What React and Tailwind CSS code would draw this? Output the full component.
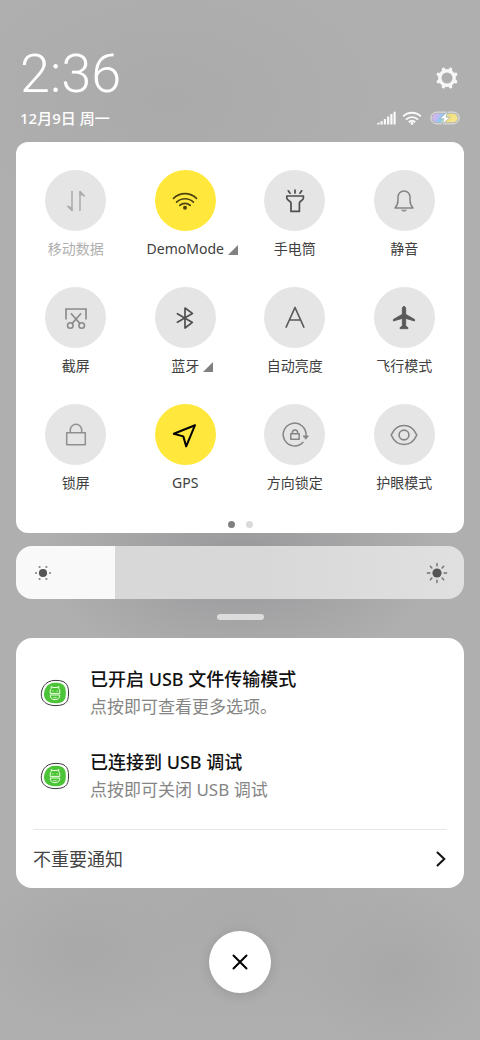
import { useState } from "react";

function Icon({ children, width = 1.6 }) {
  return (
    <svg
      viewBox="0 0 30 30"
      className="size-[30px]"
      fill="none"
      stroke="currentColor"
      strokeWidth={width}
      strokeLinecap="round"
      strokeLinejoin="round"
      aria-hidden="true"
    >
      {children}
    </svg>
  );
}

const icons = {
  data: (
    <Icon width={1.5}>
      <path d="M11 5.5V24.5L6.8 20.2M19 24.5V5.5L23.4 10" />
      <path d="M11 24.5L6.8 20.2L11 21.4zM19 5.5L23.4 10L19 8.6z" fill="currentColor" strokeWidth="0.6" />
    </Icon>
  ),
  wifi: (
    <Icon width={1.7}>
      <path d="M3.5 12.4a16.3 16.3 0 0 1 23 0M6.6 16.2a12 12 0 0 1 16.8 0M9.8 19.4a7.6 7.6 0 0 1 10.4 0" />
      <circle cx="15" cy="21.8" r="2" fill="currentColor" stroke="none" />
    </Icon>
  ),
  torch: (
    <Icon width={1.7}>
      <path d="M6.8 10H23.4V12C23.4 14.4 19.4 15 19.4 17V25.4H11V17C11 15 6.8 14.4 6.8 12z" />
      <path d="M15 4V7M8.3 4.8L10 7.2M21.7 4.8L20 7.2" />
    </Icon>
  ),
  bell: (
    <Icon width={1.5}>
      <path d="M6 22H24C22 20 21 17.5 21 14V11.3C21 7.8 18.5 5 15 5S9 7.8 9 11.3V14C9 17.5 8 20 6 22z" />
      <path d="M12.8 24.4C14 25.5 16 25.5 17.2 24.4z" fill="currentColor" strokeWidth="0.8" />
    </Icon>
  ),
  cut: (
    <Icon>
      <path d="M5 16.5V6H25V16.5" strokeLinecap="butt" strokeLinejoin="miter" />
      <path d="M10.3 10.8L18.8 20.4M19.7 10.8L11.2 20.4" />
      <circle cx="9.3" cy="22.5" r="2.8" />
      <circle cx="20.7" cy="22.5" r="2.8" />
    </Icon>
  ),
  bluetooth: (
    <Icon width={1.7}>
      <path d="M7.4 10.7L22.4 19.4L15 25V5L22.4 10.4L7.4 19.2" />
    </Icon>
  ),
  auto: (
    <Icon width={1.7}>
      <path d="M6.2 24L15 4.5L23.8 24M9.5 17H20.5" />
    </Icon>
  ),
  plane: (
    <Icon width={0.8}>
      <path
        d="M15 3.6C16.1 3.6 16.7 4.4 16.7 5.5V11.3L25.6 16.4V18L16.7 15.4V23L19 24.6V25.7H11V24.6L13.3 23V15.4L4.4 18V16.4L13.3 11.3V5.5C13.3 4.4 13.9 3.6 15 3.6z"
        fill="currentColor"
      />
    </Icon>
  ),
  lock: (
    <Icon width={1.5}>
      <path d="M5.7 12.7H24.3V24.8H5.7zM9.3 12.7V10A5.7 5.7 0 0 1 20.7 10V12.7" />
    </Icon>
  ),
  gps: (
    <Icon width={2}>
      <path d="M25 5.2L3.8 13.8L13.3 16.4L16.2 26.4z" />
    </Icon>
  ),
  rotation: (
    <Icon width={1.5}>
      <path d="M26 15.5A11.4 11.4 0 1 0 23 22.3" />
      <path d="M23.4 15.9H28.4L25.9 19z" fill="currentColor" strokeWidth="0.8" />
      <path d="M10.8 13.8H19.2V19.3H10.8zM12.4 13.8V12.6A2.6 2.6 0 0 1 17.6 12.6V13.8" />
    </Icon>
  ),
  eye: (
    <Icon>
      <path d="M2.2 15C5 8.6 9.7 5.5 15 5.5S25 8.6 27.8 15C25 21.4 20.3 24.5 15 24.5S5 21.4 2.2 15z" />
      <circle cx="15" cy="15" r="4.9" />
    </Icon>
  ),
};

const tiles = [
  { id: "data", label: "移动数据", color: "text-[#ababab]", text: "text-[#b0b0b0]", disabled: true },
  { id: "wifi", label: "DemoMode", color: "text-[#4d4412]", on: true, more: true },
  { id: "torch", label: "手电筒", color: "text-[#4f4f4f]" },
  { id: "bell", label: "静音", color: "text-[#858585]" },
  { id: "cut", label: "截屏", color: "text-[#8a8a8a]" },
  { id: "bluetooth", label: "蓝牙", color: "text-[#4f4f4f]", more: true },
  { id: "auto", label: "自动亮度", color: "text-[#5a5a5a]" },
  { id: "plane", label: "飞行模式", color: "text-[#585858]" },
  { id: "lock", label: "锁屏", color: "text-[#8f8f8f]" },
  { id: "gps", label: "GPS", color: "text-black", on: true },
  { id: "rotation", label: "方向锁定", color: "text-[#858585]" },
  { id: "eye", label: "护眼模式", color: "text-[#858585]" },
];

const notifications = [
  { title: "已开启 USB 文件传输模式", text: "点按即可查看更多选项。" },
  { title: "已连接到 USB 调试", text: "点按即可关闭 USB 调试" },
];

function Tile({ tile }) {
  return (
    <button type="button" disabled={tile.disabled} className="flex flex-col items-center">
      <span
        className={`flex size-[61px] items-center justify-center rounded-full ${tile.color} ${
          tile.on ? "bg-[#ffe83b]" : "bg-[#e5e5e5]"
        }`}
      >
        {icons[tile.id]}
      </span>
      <span className={`relative mt-2 text-sm leading-5 ${tile.text || "text-[#404040]"}`}>
        {tile.label}
        {tile.more && (
          <svg viewBox="0 0 10 10" className="absolute bottom-1 left-full ml-1 size-[10px]" aria-hidden="true">
            <path d="M10 0V10H0z" fill="#808080" />
          </svg>
        )}
      </span>
    </button>
  );
}

function Gear() {
  return (
    <svg viewBox="0 0 24 24" className="size-6" fill="none" stroke="#f7f7f7" aria-hidden="true">
      <circle cx="12" cy="12" r="7.2" strokeWidth="3.4" />
      {[22.5, 67.5, 112.5, 157.5, 202.5, 247.5, 292.5, 337.5].map((deg) => (
        <path key={deg} d="M12 3.8V2.7" strokeWidth="3.6" strokeLinecap="round" transform={`rotate(${deg} 12 12)`} />
      ))}
    </svg>
  );
}

function StatusIcons() {
  return (
    <div className="flex items-center">
      <svg viewBox="0 0 19 14" className="mr-[6px] h-[14px] w-[19px]" fill="#fafafa" aria-hidden="true">
        <path d="M0 12.6L2.5 11.2V13.5H0zM3.5 10.3H5.7V13.5H3.5zM6.8 8H9V13.5H6.8zM10.1 5.5H12.3V13.5H10.1zM13.3 3H15.5V13.5H13.3zM16.5 .8H18.7V13.5H16.5z" />
      </svg>
      <svg viewBox="0 0 20 14" className="mr-2 h-[14px] w-[20px]" fill="none" stroke="#fafafa" strokeWidth="1.9" aria-hidden="true">
        <path d="M1.2 5.4a12.6 12.6 0 0 1 17.6 0M4 8.6a8.6 8.6 0 0 1 12 0" />
        <path d="M6.8 11.2a4.8 4.8 0 0 1 6.4 0" />
        <circle cx="10" cy="12.5" r="1.4" fill="#fafafa" stroke="none" />
      </svg>
      <svg viewBox="0 0 30 14" className="h-[14px] w-[30px]" aria-hidden="true">
        <defs>
          <linearGradient id="charge" x1="0" x2="1" y1="0" y2="0.2">
            <stop offset="0" stopColor="#dfb4ea" />
            <stop offset="0.25" stopColor="#c3b8f2" />
            <stop offset="0.45" stopColor="#86cdf5" />
            <stop offset="0.58" stopColor="#c9dfb0" />
            <stop offset="0.7" stopColor="#f3e07e" />
            <stop offset="1" stopColor="#f5e68c" />
          </linearGradient>
        </defs>
        <rect x="0.8" y="1.1" width="28.4" height="11.8" rx="5.9" fill="#b4b4b6" stroke="#e4e4e4" strokeWidth="1" />
        <rect x="2.4" y="2.7" width="25.2" height="8.6" rx="4.3" fill="url(#charge)" />
        <path d="M17.8 .4L9.8 7.8H14L12.2 13.6L20.2 6.2H16z" fill="#fff" stroke="#98a0a4" strokeWidth="0.6" />
      </svg>
    </div>
  );
}

function AppIcon() {
  return (
    <svg viewBox="0 0 30 28" className="h-7 w-[30px] shrink-0" fill="none" aria-hidden="true">
      <path
        d="M15 1.4C23.5 1.4 28.6 3.2 28.6 14S24 26.4 15 26.6C6 26.4 1.3 21.8 1.3 15.5C1.3 10 4.5 1.6 15 1.4z"
        stroke="#3a3a3a"
        strokeWidth="1"
      />
      <path
        d="M15 3.8C22.4 3.8 25.8 5.4 25.8 14S22.4 24.2 15 24.3C8 24.2 4 20.6 4 15.3C4 10.6 7 4 15 3.8z"
        fill="#4cc437"
      />
      <g stroke="#eaffdf" strokeWidth="1">
        <path d="M10.2 14.4V12C10.2 10.8 10.8 9.8 11.4 9.3L11 7.5L13 8.5H17L19 7.5L18.6 9.3C19.2 9.8 19.8 10.8 19.8 12V14.4z" />
        <path d="M10.2 16H19.8C19.8 19 18.2 20.7 15 20.7S10.2 19 10.2 16z" />
        <path d="M12.5 11.8H13.3M16.7 11.8H17.5" strokeWidth="1.3" />
        <path d="M13.2 18.6H16.8" strokeWidth="0.7" />
      </g>
    </svg>
  );
}

function BrightnessSlider() {
  const [level, setLevel] = useState(22);

  return (
    <div className="relative mt-[13px]">
      <input
        type="range"
        min="0"
        max="100"
        value={level}
        onChange={(e) => setLevel(Number(e.target.value))}
        aria-label="亮度"
        className="block h-[53px] w-full appearance-none rounded-2xl [&::-webkit-slider-thumb]:size-0 [&::-webkit-slider-thumb]:appearance-none"
        style={{ background: `linear-gradient(to right, #f9f9f9 ${level}%, #d8d8d8 ${level}%, #d8d8d8 55%, #e0e0e0)` }}
      />
      <div className="pointer-events-none absolute inset-0 flex items-center justify-between px-4">
        <svg viewBox="0 0 22 22" className="size-[22px]" fill="#858585" aria-hidden="true">
          <circle cx="11" cy="11" r="4.1" fill="#555" />
          <circle cx="4" cy="11" r="1.1" />
          <circle cx="18" cy="11" r="1.1" />
          <circle cx="7.6" cy="5" r="1.1" />
          <circle cx="14.4" cy="5" r="1.1" />
          <circle cx="7.6" cy="17" r="1.1" />
          <circle cx="14.4" cy="17" r="1.1" />
        </svg>
        <svg viewBox="0 0 22 22" className="size-[22px]" stroke="#707070" strokeWidth="1.4" strokeLinecap="round" aria-hidden="true">
          <circle cx="11" cy="11" r="4.6" fill="#555" stroke="none" />
          <path d="M11 1.4V3.9M11 18.1V20.6M1.4 11H3.9M18.1 11H20.6M4.3 4.3L5.9 5.9M16.1 16.1L17.7 17.7M17.7 4.3L16.1 5.9M5.9 16.1L4.3 17.7" />
        </svg>
      </div>
    </div>
  );
}

export default function App() {
  return (
    <div className="min-h-screen bg-[#afafaf] bg-[radial-gradient(200px_110px_at_50%_560px,#98989b,transparent),radial-gradient(200px_110px_at_50%_920px,#aaaaaa,transparent),radial-gradient(100px_80px_at_82%_970px,#a8a8a8,transparent),radial-gradient(110px_80px_at_18%_950px,#a8a8a8,transparent),radial-gradient(220px_140px_at_35%_100px,#abaaab,transparent)] px-4 pt-12 pb-12 font-['Noto_Sans','Noto_Sans_CJK_SC',sans-serif]">
      <header className="px-1 pb-[14px] text-white">
        <div className="flex items-center justify-between">
          <time className="font-['Roboto',sans-serif] text-[54px] leading-[52px] font-light">2:36</time>
          <button type="button" aria-label="设置" className="mt-2 pr-[1px]">
            <Gear />
          </button>
        </div>
        <div className="mt-2 flex items-center justify-between">
          <span className="text-[15px] leading-5 font-medium">12月9日 周一</span>
          <StatusIcons />
        </div>
      </header>

      <main>
        <section className="rounded-xl bg-white px-[5px] pt-7 pb-[5px]">
          <div className="grid grid-cols-4 gap-y-7">
            {tiles.map((tile) => (
              <Tile key={tile.id} tile={tile} />
            ))}
          </div>
          <div className="mt-7 flex justify-center gap-[11px]">
            <span className="size-[7px] rounded-full bg-[#808080]" />
            <span className="size-[7px] rounded-full bg-[#dadada]" />
          </div>
        </section>

        <BrightnessSlider />

        <div className="mx-auto mt-[15px] h-[6px] w-[47px] rounded-full bg-[#dcdcdc]" />

        <section className="mt-[18px] rounded-2xl bg-white pt-7">
          <ul className="flex flex-col gap-[29px] px-6 pb-[26px]">
            {notifications.map((item) => (
              <li key={item.title} className="flex items-center gap-5">
                <AppIcon />
                <div>
                  <h2 className="text-lg leading-[27px] font-medium text-[#111]">{item.title}</h2>
                  <p className="text-[17px] leading-[27px] text-[#858585]">{item.text}</p>
                </div>
              </li>
            ))}
          </ul>
          <button
            type="button"
            className="mx-auto flex h-[59px] w-[414px] max-w-full items-center justify-between border-t border-[#e6e6e6] text-lg text-[#444]"
          >
            不重要通知
            <svg viewBox="0 0 12 18" className="h-[18px] w-3" fill="none" stroke="#111" strokeWidth="2" strokeLinecap="round" aria-hidden="true">
              <path d="M2.5 2.5L9.3 9L2.5 15.5" />
            </svg>
          </button>
        </section>
      </main>

      <button
        type="button"
        aria-label="关闭"
        className="mx-auto mt-[43px] flex size-[62px] items-center justify-center rounded-full bg-white shadow-[0_2px_12px_rgba(0,0,0,0.12)]"
      >
        <svg viewBox="0 0 18 18" className="size-[18px]" stroke="#000" strokeWidth="2" strokeLinecap="round" aria-hidden="true">
          <path d="M2.5 2.5L15.5 15.5M15.5 2.5L2.5 15.5" />
        </svg>
      </button>
    </div>
  );
}
